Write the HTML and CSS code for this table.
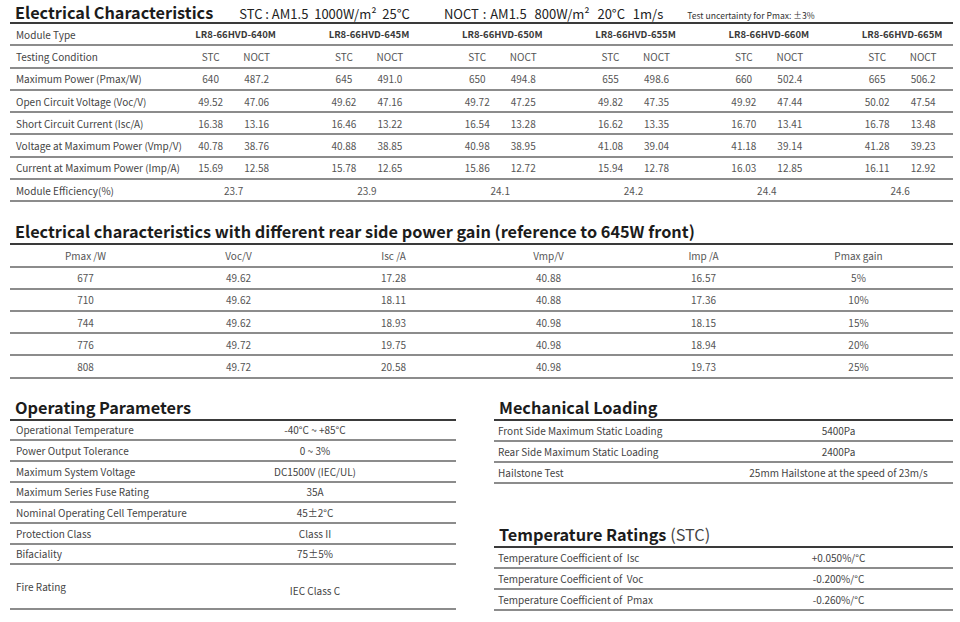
FILE: index.html
```html
<!DOCTYPE html>
<html>
<head>
<meta charset="utf-8">
<link rel="stylesheet" href="styles.css">
</head>
<body>
<div class="page">
  <section class="elec">
    <div class="sec-head head-top">
      <h2 class="title">Electrical Characteristics</h2>
      <span class="cond stc">STC : AM1.5&nbsp;&nbsp;1000W/m²&nbsp;&nbsp;25°C</span>
      <span class="cond noct">NOCT : AM1.5&nbsp;&nbsp;800W/m²&nbsp;&nbsp;20°C&nbsp;&nbsp;1m/s</span>
      <span class="note">Test uncertainty for Pmax: ±3%</span>
    </div>
    <div class="erow">
      <div class="lab">Module Type</div>
      <div class="grp model">LR8-66HVD-640M</div>
      <div class="grp model">LR8-66HVD-645M</div>
      <div class="grp model">LR8-66HVD-650M</div>
      <div class="grp model">LR8-66HVD-655M</div>
      <div class="grp model">LR8-66HVD-660M</div>
      <div class="grp model">LR8-66HVD-665M</div>
    </div>
    <div class="erow">
      <div class="lab">Testing Condition</div>
      <div class="grp"><span>STC</span><span>NOCT</span></div>
      <div class="grp"><span>STC</span><span>NOCT</span></div>
      <div class="grp"><span>STC</span><span>NOCT</span></div>
      <div class="grp"><span>STC</span><span>NOCT</span></div>
      <div class="grp"><span>STC</span><span>NOCT</span></div>
      <div class="grp"><span>STC</span><span>NOCT</span></div>
    </div>
    <div class="erow">
      <div class="lab">Maximum Power (Pmax/W)</div>
      <div class="grp"><span>640</span><span>487.2</span></div>
      <div class="grp"><span>645</span><span>491.0</span></div>
      <div class="grp"><span>650</span><span>494.8</span></div>
      <div class="grp"><span>655</span><span>498.6</span></div>
      <div class="grp"><span>660</span><span>502.4</span></div>
      <div class="grp"><span>665</span><span>506.2</span></div>
    </div>
    <div class="erow">
      <div class="lab">Open Circuit Voltage (Voc/V)</div>
      <div class="grp"><span>49.52</span><span>47.06</span></div>
      <div class="grp"><span>49.62</span><span>47.16</span></div>
      <div class="grp"><span>49.72</span><span>47.25</span></div>
      <div class="grp"><span>49.82</span><span>47.35</span></div>
      <div class="grp"><span>49.92</span><span>47.44</span></div>
      <div class="grp"><span>50.02</span><span>47.54</span></div>
    </div>
    <div class="erow">
      <div class="lab">Short Circuit Current (Isc/A)</div>
      <div class="grp"><span>16.38</span><span>13.16</span></div>
      <div class="grp"><span>16.46</span><span>13.22</span></div>
      <div class="grp"><span>16.54</span><span>13.28</span></div>
      <div class="grp"><span>16.62</span><span>13.35</span></div>
      <div class="grp"><span>16.70</span><span>13.41</span></div>
      <div class="grp"><span>16.78</span><span>13.48</span></div>
    </div>
    <div class="erow">
      <div class="lab">Voltage at Maximum Power (Vmp/V)</div>
      <div class="grp"><span>40.78</span><span>38.76</span></div>
      <div class="grp"><span>40.88</span><span>38.85</span></div>
      <div class="grp"><span>40.98</span><span>38.95</span></div>
      <div class="grp"><span>41.08</span><span>39.04</span></div>
      <div class="grp"><span>41.18</span><span>39.14</span></div>
      <div class="grp"><span>41.28</span><span>39.23</span></div>
    </div>
    <div class="erow">
      <div class="lab">Current at Maximum Power (Imp/A)</div>
      <div class="grp"><span>15.69</span><span>12.58</span></div>
      <div class="grp"><span>15.78</span><span>12.65</span></div>
      <div class="grp"><span>15.86</span><span>12.72</span></div>
      <div class="grp"><span>15.94</span><span>12.78</span></div>
      <div class="grp"><span>16.03</span><span>12.85</span></div>
      <div class="grp"><span>16.11</span><span>12.92</span></div>
    </div>
    <div class="erow">
      <div class="lab">Module Efficiency(%)</div>
      <div class="grp">23.7</div>
      <div class="grp">23.9</div>
      <div class="grp">24.1</div>
      <div class="grp">24.2</div>
      <div class="grp">24.4</div>
      <div class="grp">24.6</div>
    </div>
  </section>

  <section class="rear">
    <div class="sec-head">
      <h2 class="title">Electrical characteristics with different rear side power gain (reference to 645W front)</h2>
    </div>
    <div class="rrow">
      <div>Pmax /W</div><div>Voc/V</div><div>Isc /A</div><div>Vmp/V</div><div>Imp /A</div><div>Pmax gain</div>
    </div>
    <div class="rrow">
      <div>677</div><div>49.62</div><div>17.28</div><div>40.88</div><div>16.57</div><div>5%</div>
    </div>
    <div class="rrow">
      <div>710</div><div>49.62</div><div>18.11</div><div>40.88</div><div>17.36</div><div>10%</div>
    </div>
    <div class="rrow">
      <div>744</div><div>49.62</div><div>18.93</div><div>40.98</div><div>18.15</div><div>15%</div>
    </div>
    <div class="rrow">
      <div>776</div><div>49.72</div><div>19.75</div><div>40.98</div><div>18.94</div><div>20%</div>
    </div>
    <div class="rrow">
      <div>808</div><div>49.72</div><div>20.58</div><div>40.98</div><div>19.73</div><div>25%</div>
    </div>
  </section>

  <div class="bottom">
    <section class="op">
      <div class="sec-head">
        <h2 class="title">Operating Parameters</h2>
      </div>
      <div class="krow"><div class="k">Operational Temperature</div><div class="v">-40°C ~ +85°C</div></div>
      <div class="krow"><div class="k">Power Output Tolerance</div><div class="v">0 ~ 3%</div></div>
      <div class="krow"><div class="k">Maximum System Voltage</div><div class="v">DC1500V (IEC/UL)</div></div>
      <div class="krow"><div class="k">Maximum Series Fuse Rating</div><div class="v">35A</div></div>
      <div class="krow"><div class="k">Nominal Operating Cell Temperature</div><div class="v">45±2°C</div></div>
      <div class="krow"><div class="k">Protection Class</div><div class="v">Class II</div></div>
      <div class="krow"><div class="k">Bifaciality</div><div class="v">75±5%</div></div>
      <div class="krow fire"><div class="k">Fire Rating</div><div class="v">IEC Class C</div></div>
    </section>

    <div class="right">
      <section class="mech">
        <div class="sec-head">
          <h2 class="title">Mechanical Loading</h2>
        </div>
        <div class="krow"><div class="k">Front Side Maximum Static Loading</div><div class="v">5400Pa</div></div>
        <div class="krow"><div class="k">Rear Side Maximum Static Loading</div><div class="v">2400Pa</div></div>
        <div class="krow"><div class="k">Hailstone Test</div><div class="v">25mm Hailstone at the speed of 23m/s</div></div>
      </section>

      <section class="temp">
        <div class="sec-head">
          <h2 class="title">Temperature Ratings <span class="light">(STC)</span></h2>
        </div>
        <div class="krow"><div class="k">Temperature Coefficient of&nbsp; Isc</div><div class="v">+0.050%/°C</div></div>
        <div class="krow"><div class="k">Temperature Coefficient of&nbsp; Voc</div><div class="v">-0.200%/°C</div></div>
        <div class="krow"><div class="k">Temperature Coefficient of&nbsp; Pmax</div><div class="v">-0.260%/°C</div></div>
      </section>
    </div>
  </div>
</div>
</body>
</html>
```
FILE: styles.css
```css
* { box-sizing: border-box; }
html, body {
  margin: 0;
  padding: 0;
  background: #ffffff;
}
body {
  font-family: "Noto Sans CJK SC", "Noto Sans", sans-serif;
  color: #444;
  font-size: 10px;
  overflow: hidden;
}
.page {
  width: 960px;
  padding: 0 7px 0 10px;
  overflow: hidden;
}
.title {
  margin: 0;
  font-size: 16.3px;
  font-weight: 700;
  color: #1c1c1c;
  line-height: 18px;
  padding-left: 5px;
  white-space: nowrap;
}
.light {
  font-weight: 400;
  color: #444;
}
.sec-head {
  display: flex;
  align-items: baseline;
  height: 24px;
  padding-top: 1px;
  border-bottom: 2px solid #3a3a3a;
}
.sec-head.head-top {
  padding-top: 3px;
}
.cond {
  font-size: 13px;
  color: #222;
  white-space: nowrap;
}
.stc { margin-left: 26px; }
.noct {
  margin-left: 34px;
  word-spacing: 1px;
}
.note {
  font-size: 8.6px;
  color: #333;
  margin-left: 24px;
  white-space: nowrap;
}

/* Electrical table */
.erow {
  display: grid;
  grid-template-columns: 159px repeat(6, 133.3px);
  height: 22.3px;
  border-bottom: 2px solid #8c8c8c;
  align-items: center;
}
.lab {
  padding-left: 6px;
  white-space: nowrap;
}
.grp {
  display: flex;
  justify-content: center;
  padding-right: 4px;
  color: #555;
}
.grp span {
  width: 46px;
  text-align: center;
}
.grp.model {
  color: #3a3a3a;
  font-weight: 700;
  font-size: 9.5px;
  padding-right: 0;
}

/* Rear side table */
.rear { margin-top: 19px; }
.rrow {
  display: grid;
  grid-template-columns: 151px repeat(5, 155px);
  height: 22.2px;
  border-bottom: 2px solid #8c8c8c;
  align-items: center;
  text-align: center;
  color: #555;
}

/* Bottom sections */
.bottom {
  display: flex;
  gap: 38px;
  margin-top: 18px;
}
.op { width: 446px; }
.right { width: 459px; }
.temp { margin-top: 40px; }
.krow {
  display: grid;
  align-items: center;
  height: 20.7px;
  border-bottom: 2px solid #8c8c8c;
}
.op .krow { grid-template-columns: 164px 1fr; }
.right .krow { grid-template-columns: 230px 1fr; height: 21px; }
.k {
  padding-left: 6px;
  white-space: nowrap;
}
.right .k { padding-left: 4px; }
.v {
  text-align: center;
  color: #444;
  white-space: nowrap;
}
.krow.fire {
  height: 45px;
}
.krow.fire .v {
  padding-top: 8px;
}
```
